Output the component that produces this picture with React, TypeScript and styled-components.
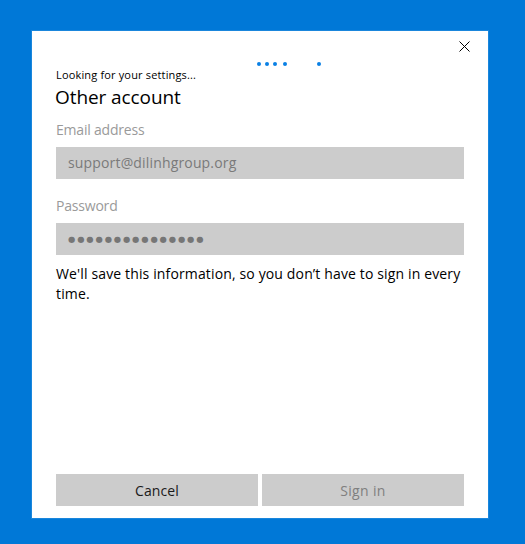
import styled, { createGlobalStyle } from "styled-components";

const Global = createGlobalStyle`
  html, body {
    margin: 0;
    padding: 0;
    background: #0078d7;
  }
`;

const Page = styled.div`
  box-sizing: border-box;
  width: 525px;
  height: 544px;
  padding: 30px 36px 25px 31px;
  background: #0078d7;
  font-family: "Open Sans", "Noto Sans", sans-serif;
`;

const Dialog = styled.div`
  position: relative;
  box-sizing: border-box;
  height: 100%;
  display: flex;
  flex-direction: column;
  padding: 35px 24px 12px 24px;
  background: #fff;
  border: 1px solid #1a86dc;
`;

const Close = styled.button`
  position: absolute;
  top: 10px;
  right: 18px;
  width: 11px;
  height: 11px;
  padding: 0;
  display: flex;
  border: 0;
  background: none;
`;

const Dot = styled.span<{ $left: number }>`
  position: absolute;
  top: 31px;
  left: ${(p) => p.$left}px;
  width: 4px;
  height: 4px;
  border-radius: 50%;
  background: #0a80e4;
`;

const Status = styled.div`
  height: 18px;
  font-size: 11px;
  line-height: 18px;
  letter-spacing: 0.16px;
  color: #000;
`;

const Title = styled.h1`
  margin: 0 0 0 -1px;
  height: 25px;
  font-size: 19px;
  font-weight: 400;
  line-height: 26px;
  letter-spacing: -0.08px;
  color: #000;
`;

const Label = styled.div`
  margin-top: 11px;
  height: 20px;
  font-size: 14px;
  line-height: 20px;
  letter-spacing: -0.2px;
  color: #9a9a9a;
`;

const Field = styled.div`
  box-sizing: border-box;
  margin-top: 7px;
  height: 32px;
  padding: 0 0 2px 12px;
  display: flex;
  align-items: center;
  background: #cccccc;
  font-size: 14px;
  letter-spacing: 0.16px;
  color: #7a7a7a;
`;

const Gap = styled.div`
  height: 6px;
`;

const Mask = styled.span`
  font-family: "DejaVu Sans", sans-serif;
  font-size: 8.4px;
  letter-spacing: 1.85px;
  color: #767676;
  transform: translateY(1px);
`;

const Note = styled.p`
  margin: 9px 0 0;
  font-size: 14px;
  line-height: 20px;
  letter-spacing: 0.14px;
  color: #000;
`;

const Actions = styled.div`
  margin-top: auto;
  display: grid;
  grid-template-columns: 1fr 1fr;
  gap: 4px;
`;

const Action = styled.button<{ $off?: boolean }>`
  height: 32px;
  padding: 0;
  border: 0;
  background: #cccccc;
  font-family: inherit;
  font-size: 14px;
  letter-spacing: ${(p) => (p.$off ? "0.35px" : "0.1px")};
  color: ${(p) => (p.$off ? "#7f7f7f" : "#1a1a1a")};
`;

export default function App() {
  return (
    <>
      <Global />
      <Page>
        <Dialog>
          <Close aria-label="Close">
            <svg width="11" height="11" viewBox="0 0 11 11">
              <path d="M0.5 0.5 L10.5 10.5 M10.5 0.5 L0.5 10.5" stroke="#000" strokeWidth="1" fill="none" />
            </svg>
          </Close>
          {[225, 233, 241, 251, 285].map((x) => (
            <Dot key={x} $left={x} />
          ))}
          <Status>Looking for your settings...</Status>
          <Title>Other account</Title>
          <Label>Email address</Label>
          <Field>support@dilinhgroup.org</Field>
          <Gap />
          <Label>Password</Label>
          <Field>
            <Mask>●●●●●●●●●●●●●●●</Mask>
          </Field>
          <Note>We'll save this information, so you don’t have to sign in every time.</Note>
          <Actions>
            <Action>Cancel</Action>
            <Action $off>Sign in</Action>
          </Actions>
        </Dialog>
      </Page>
    </>
  );
}
